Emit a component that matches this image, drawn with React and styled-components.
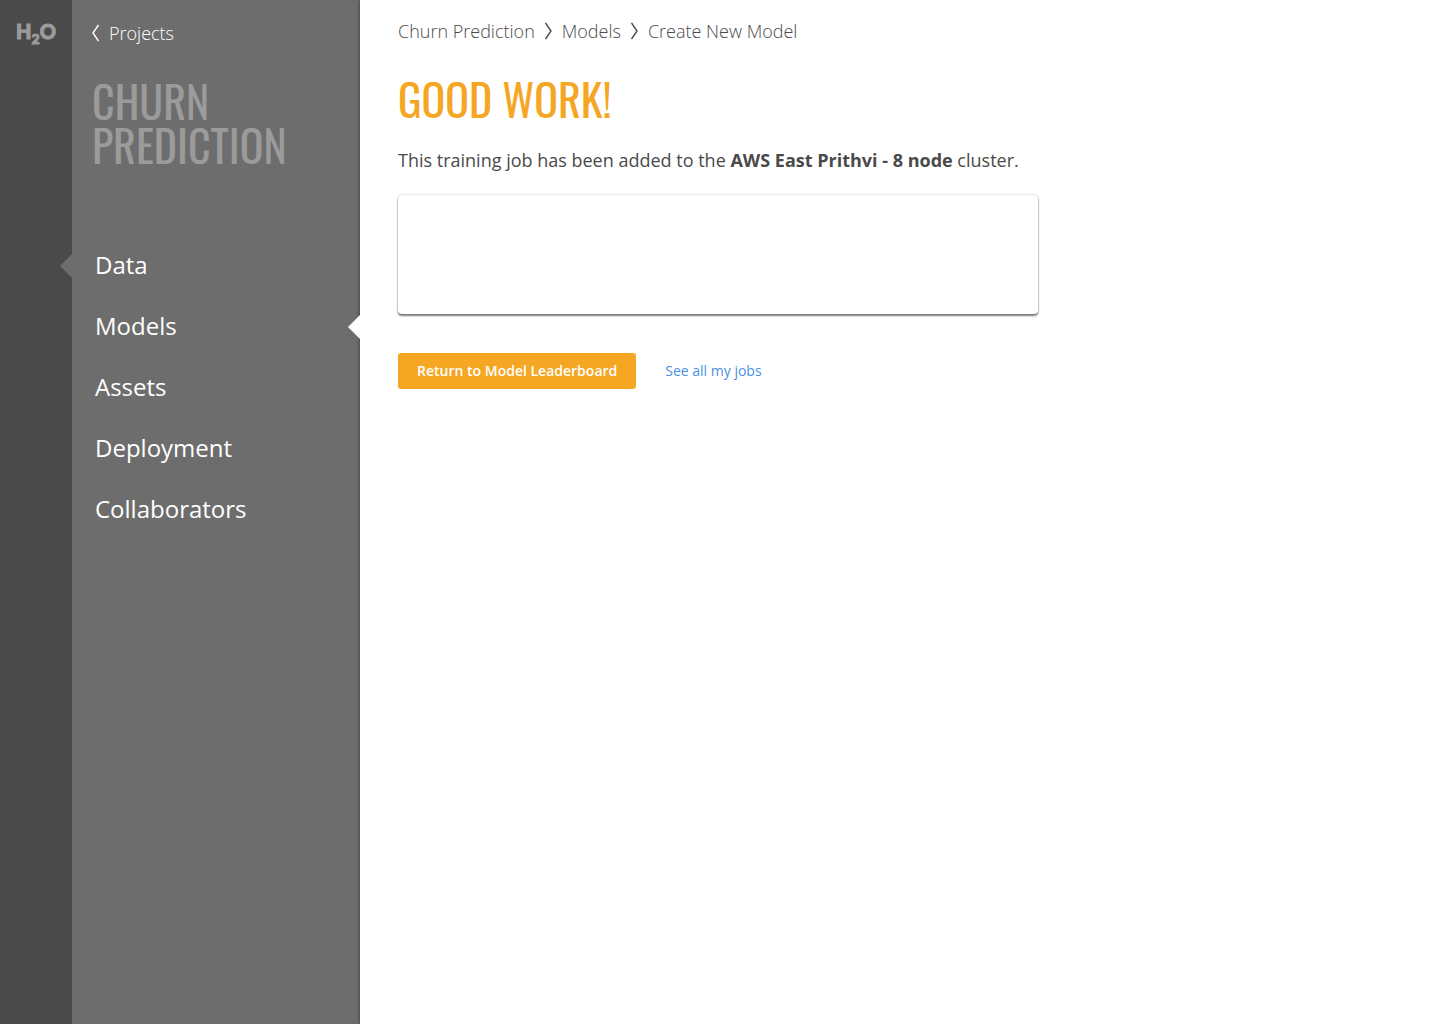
import React from "react";
import styled, { createGlobalStyle } from "styled-components";

const GlobalStyle = createGlobalStyle`
  *, *::before, *::after { box-sizing: border-box; }
  body {
    margin: 0;
    background: #fff;
    color: #4a4a4a;
    font-family: "Open Sans", "Noto Sans", sans-serif;
  }
  a { color: inherit; text-decoration: none; }
`;

const displayFont = `Oswald, "Liberation Sans Narrow", "Roboto Condensed", sans-serif`;

const Page = styled.div`
  display: flex;
  min-height: 100vh;
`;

const Rail = styled.aside`
  flex: none;
  width: 72px;
  padding-top: 16px;
  background: #4a4a4a;
`;

const Logo = styled.a`
  display: flex;
  justify-content: center;
  color: #9b9b9b;
  font: 900 20px/30px Lato, sans-serif;
  -webkit-text-stroke: 1px #9b9b9b;
`;

const LogoDigit = styled.span`
  padding-top: 8px;
  font-size: 14px;
`;

const Sidebar = styled.aside`
  flex: none;
  width: 288px;
  padding: 19px 20px 0;
  background: #6d6d6d;
`;

const BackLink = styled.a`
  display: flex;
  align-items: center;
  gap: 10px;
  color: #fff;
  font-size: 18px;
  font-weight: 300;
  line-height: 28px;
`;

const ProjectName = styled.h2`
  margin: 32px 0 67px;
  color: #9b9b9b;
  font: 400 44px/44px ${displayFont};
  text-transform: uppercase;
`;

const NavList = styled.ul`
  margin: 0 -20px;
  padding: 0;
  list-style: none;
`;

const NavItem = styled.li`
  position: relative;

  &::before {
    content: "";
    display: ${(p) => (p.$marker ? "block" : "none")};
    position: absolute;
    top: 20px;
    ${(p) => (p.$marker === "rail" ? "left: -12px;" : "right: 0;")}
    width: 12px;
    height: 24px;
    background: ${(p) => (p.$marker === "rail" ? "#6d6d6d" : "#fff")};
    clip-path: polygon(100% 0, 100% 100%, 0 50%);
    z-index: 1;
  }
`;

const NavLink = styled.a`
  display: block;
  padding: 0 23px;
  color: #fff;
  font-size: 24px;
  line-height: 61px;
`;

const Main = styled.main`
  flex: 1;
  min-width: 0;
  padding: 17px 38px;
  background: #fff;
  box-shadow: 0 0 4px rgba(0, 0, 0, 0.5);
`;

const Breadcrumbs = styled.nav`
  display: flex;
  align-items: center;
  gap: 10px;
  font-size: 18px;
  font-weight: 300;
  line-height: 28px;
`;

const Title = styled.h1`
  margin: 24px 0 17px;
  color: #f5a623;
  font: 400 44px/60px ${displayFont};
  text-transform: uppercase;
`;

const Message = styled.p`
  margin: 0 0 21px;
  font-size: 18px;
  line-height: 28px;
`;

const Card = styled.section`
  max-width: 640px;
  height: 119px;
  border-radius: 4px;
  background: #fff;
  box-shadow: 0 0 2px rgba(0, 0, 0, 0.3), 0 2px 2px rgba(0, 0, 0, 0.5);
`;

const Actions = styled.div`
  display: flex;
  align-items: center;
  gap: 29px;
  margin-top: 39px;
  font-size: 14px;
`;

const PrimaryButton = styled.button`
  height: 36px;
  padding: 0 19px 2px;
  border: 0;
  border-radius: 3px;
  background: #f5a623;
  color: #fff;
  font: inherit;
  font-weight: 600;
  cursor: pointer;
`;

const JobsLink = styled.a`
  padding-bottom: 2px;
  color: #4a90e2;
`;

const Chevron = ({ left }) => (
  <svg width="7" height="18" viewBox="0 0 7 18" fill="none" stroke="currentColor" strokeWidth="1.4" aria-hidden="true">
    <path d={left ? "M6.5 1 1 9l5.5 8" : "M.5 1 6 9 .5 17"} />
  </svg>
);

const navItems = [
  { label: "Data", marker: "rail" },
  { label: "Models", marker: "content" },
  { label: "Assets" },
  { label: "Deployment" },
  { label: "Collaborators" },
];

export default function App() {
  return (
    <Page>
      <GlobalStyle />
      <Rail>
        <Logo href="#home">
          H<LogoDigit>2</LogoDigit>O
        </Logo>
      </Rail>
      <Sidebar>
        <BackLink href="#projects">
          <Chevron left />
          Projects
        </BackLink>
        <ProjectName>Churn Prediction</ProjectName>
        <nav>
          <NavList>
            {navItems.map(({ label, marker }) => (
              <NavItem key={label} $marker={marker}>
                <NavLink href={`#${label.toLowerCase()}`}>{label}</NavLink>
              </NavItem>
            ))}
          </NavList>
        </nav>
      </Sidebar>
      <Main>
        <Breadcrumbs>
          <a href="#churn">Churn Prediction</a>
          <Chevron />
          <a href="#models">Models</a>
          <Chevron />
          <a href="#create">Create New Model</a>
        </Breadcrumbs>
        <Title>Good work!</Title>
        <Message>
          This training job has been added to the <strong>AWS East Prithvi - 8 node</strong> cluster.
        </Message>
        <Card />
        <Actions>
          <PrimaryButton type="button">Return to Model Leaderboard</PrimaryButton>
          <JobsLink href="#jobs">See all my jobs</JobsLink>
        </Actions>
      </Main>
    </Page>
  );
}
